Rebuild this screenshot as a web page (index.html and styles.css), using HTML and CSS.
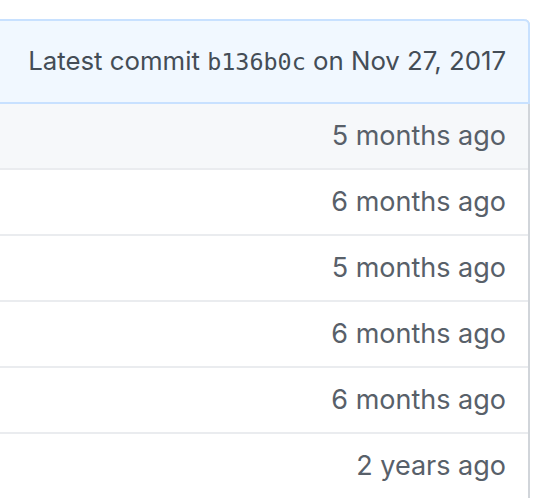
FILE: index.html
```html
<!DOCTYPE html>
<html>
<head>
<meta charset="utf-8">
<link rel="stylesheet" href="styles.css">
</head>
<body>
<div class="files">
  <div class="tease">Latest commit <code class="sha">b136b0c</code> on Nov 27, 2017</div>
  <div class="row up">5 months ago</div>
  <div class="row">6 months ago</div>
  <div class="row">5 months ago</div>
  <div class="row">6 months ago</div>
  <div class="row">6 months ago</div>
  <div class="row last">2 years ago</div>
</div>
</body>
</html>
```
FILE: styles.css
```css
html, body {
  margin: 0;
  padding: 0;
  background: #fff;
}
body {
  font-family: Inter, "Liberation Sans", sans-serif;
  font-size: 27px;
  line-height: 40px;
  color: #586069;
  overflow: hidden;
}
.files {
  margin: 19px 18px 0 -40px;
  border: 2px solid #d1d5da;
  border-top: 0;
  border-radius: 6px 6px 0 0;
}
.tease {
  background: #f1f8ff;
  border: 2px solid #c8e1ff;
  margin: 0 -2px;
  border-radius: 6px 6px 0 0;
  padding: 20px 22px 20px 20px;
  text-align: right;
  font-size: 25.8px;
  color: #444d56;
}
.sha {
  font-family: "DejaVu Sans Mono", "Liberation Mono", monospace;
  font-size: 23.4px;
}
.row {
  padding: 12px 22px 12px 20px;
  text-align: right;
  border-bottom: 2px solid #eaecef;
  background: #fff;
}
.row.up {
  background: #f6f8fa;
}
```
